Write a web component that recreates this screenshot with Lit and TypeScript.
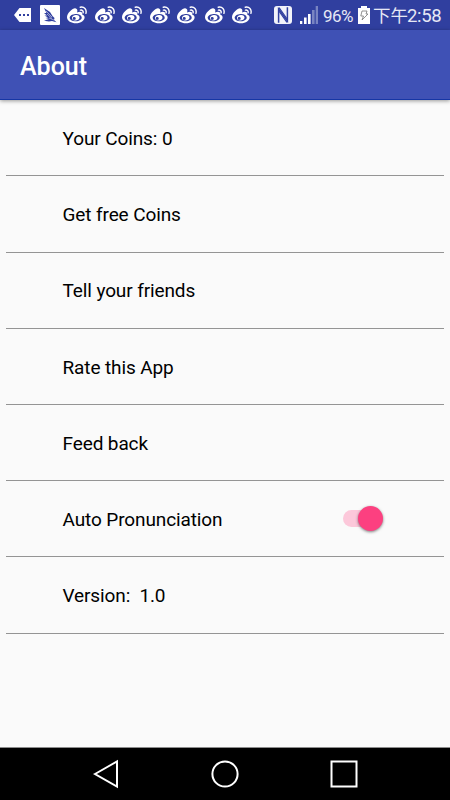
import { LitElement, html, css } from "lit";
import { customElement, property } from "lit/decorators.js";

@customElement("weibo-icon")
class WeiboIcon extends LitElement {
  static styles = css`
    :host { display: block; width: 20px; height: 18px; }
    .glyph { display: block; }
  `;
  render() {
    return html`<svg class="glyph" width="20" height="18" viewBox="0 0 20 18">
      <path fill="#fff" fill-rule="evenodd" d="M8.2 2.2C6 1.9 0 6.8 0 11.2C0 15 4.5 17.2 8.8 17.2C14 17.2 17.6 14.2 17.6 11.4C17.6 9.8 16.4 8.9 15.2 8.5C15.8 6 13.6 5.2 10.1 6.4C10.9 3.9 10 2.5 8.2 2.2ZM8.4 8.1C12 7.8 14.5 9.3 14.7 11.4C14.8 13.4 12.4 15 8.8 15.2C5.3 15.4 2.8 14.1 2.7 12.1C2.6 10 5 8.4 8.4 8.1Z"/>
      <path fill="#fff" fill-rule="evenodd" d="M8.8 8.9C11.2 8.7 12.7 9.9 12.5 11.8C12.2 13.6 10.2 14.8 8 14.6C5.7 14.4 4.6 13 5 11.5C5.4 10 7 9.1 8.8 8.9ZM7.6 11.1A1.5 1.4 0 1 0 7.7 13.8A1.5 1.4 0 0 0 7.6 11.1Z"/>
      <path fill="none" stroke="#fff" stroke-width="1.4" stroke-linecap="round" d="M13.2 1.2C17.2.3 20 3.5 18.9 7.4M13.4 4.1C15.3 3.7 16.6 5.2 16.1 6.8"/>
    </svg>`;
  }
}

@customElement("status-bar")
class StatusBar extends LitElement {
  static styles = css`
    :host { display: flex; align-items: center; height: 30px; background: #303f9f; color: #e6e8f5; white-space: nowrap; }
    .icon { display: block; flex: none; }
    .more { margin-left: 14px; }
    .bird { margin-left: 8px; }
    .alerts { display: flex; gap: 7.5px; margin-left: 7px; }
    .nfc { margin-left: 22px; }
    .signal { margin-left: 8px; }
    .percent { margin-left: 5px; width: 32px; font-size: 17px; line-height: 30px; letter-spacing: -0.5px; padding-top: 1px; }
    .battery { margin-left: 3px; }
    .clock { display: flex; align-items: center; margin-left: 3px; line-height: 30px; padding-top: 1px; }
    .period { width: 34px; margin-top: -2px; font: 17.5px/30px "Noto Sans CJK TC", sans-serif; }
    .time { font-size: 18.5px; letter-spacing: -0.35px; }
  `;
  render() {
    return html`
      <svg class="icon more" width="18" height="16" viewBox="0 0 18 16">
        <path fill="#fff" d="M5.5 1H17V15H5.5L0 8Z"/>
        <path fill="#303f9f" d="M5 7h2v2H5zM9 7h2v2H9zM13 7h2v2h-2z"/>
      </svg>
      <svg class="icon bird" width="20" height="20" viewBox="0 0 20 20">
        <rect width="20" height="20" rx="1" fill="#fff"/>
        <path fill="#303f9f" d="M4 3L10 7L12.5 11L14.5 13L14 15L16.5 17.2L12 16L9 16.5L4 15.8L9 14L5.5 13L8 12.4L4.5 10.5L7 10.4L4 8L6.5 8Z"/>
        <path fill="none" stroke="#fff" stroke-width=".5" d="M6 6L12 12M7 9L12 13.5M9 13L14 15"/>
      </svg>
      <div class="alerts">${Array.from({ length: 7 }, () => html`<weibo-icon></weibo-icon>`)}</div>
      <svg class="icon nfc" width="18" height="18" viewBox="0 0 18 18">
        <rect width="18" height="18" rx="3" fill="#f2f3fa"/>
        <path fill="none" stroke="#303f9f" stroke-width="1.5" d="M4.6 16.8V3L13.4 15V1.2"/>
        <path fill="none" stroke="#303f9f" stroke-width="1.2" d="M5 1.6L12.8 12.5M5.2 5.5L13 16.4"/>
      </svg>
      <svg class="icon signal" width="18" height="18" viewBox="0 0 18 18">
        <path fill="#fff" d="M0 15h2.3v3H0zM4 11.5h2.6v6.5H4zM8 8h2.6v10H8z"/>
        <path fill="#7984c2" d="M12 4h2.6v14H12zM15.7 0H18v18h-2.3z"/>
      </svg>
      <span class="percent">96%</span>
      <svg class="icon battery" width="12" height="18" viewBox="0 0 12 18">
        <path fill="#fff" d="M3 0h6v2h3v16H0V2h3z"/>
        <path fill="none" stroke="#777" stroke-width=".8" d="M4 5H9L8 8H10L4 14L5.5 10H2.8Z"/>
      </svg>
      <div class="clock"><span class="period">下午</span><span class="time">2:58</span></div>
    `;
  }
}

@customElement("setting-row")
class SettingRow extends LitElement {
  @property() label = "";
  static styles = css`
    :host { display: flex; align-items: center; box-sizing: border-box; height: 76.2px; margin: 0 6px; padding: 1px 61px 0 56.5px; border-bottom: 1px solid #949494; }
    .label { flex: 1; padding-top: 1.3px; font-size: 19px; line-height: 24px; letter-spacing: -0.11px; color: #000; white-space: pre; }
  `;
  render() {
    return html`<span class="label">${this.label}</span><slot></slot>`;
  }
}

@customElement("toggle-switch")
class ToggleSwitch extends LitElement {
  static styles = css`
    :host { display: flex; align-items: center; justify-content: flex-end; width: 41px; height: 26px; margin-bottom: 1px; }
    .track { width: 28px; height: 17px; margin-right: -13px; border-radius: 9px; background: #fcc8da; }
    .thumb { width: 25px; height: 25px; border-radius: 50%; background: #fc4080; box-shadow: 0 1px 3px rgba(0, 0, 0, 0.5); }
  `;
  render() {
    return html`<div class="track"></div><div class="thumb"></div>`;
  }
}

@customElement("app-root")
class AppRoot extends LitElement {
  static styles = css`
    :host { display: flex; flex-direction: column; width: 450px; height: 800px; background: #fafafa; font-family: Roboto, "Noto Sans CJK TC", sans-serif; overflow: hidden; }
    .toolbar { display: flex; align-items: center; box-sizing: border-box; height: 70px; padding: 5px 20px 0; background: #3f51b5; border-bottom: 1px solid #1636a5; box-shadow: 0 1px 4px rgba(0, 0, 0, 0.4); }
    .title { margin: 0; font-size: 25px; line-height: 32px; font-weight: 500; color: #fff; }
    .list { flex: 1; padding-top: 0.3px; }
    .nav { display: block; height: 53px; background: #000; border-top: 1px solid #8c8c8c; box-sizing: border-box; }
  `;
  render() {
    return html`
      <status-bar></status-bar>
      <header class="toolbar"><h1 class="title">About</h1></header>
      <main class="list">
        <setting-row label="Your Coins: 0"></setting-row>
        <setting-row label="Get free Coins"></setting-row>
        <setting-row label="Tell your friends"></setting-row>
        <setting-row label="Rate this App"></setting-row>
        <setting-row label="Feed back"></setting-row>
        <setting-row label="Auto Pronunciation"><toggle-switch></toggle-switch></setting-row>
        <setting-row label="Version:  1.0"></setting-row>
      </main>
      <svg class="nav" width="450" height="53" viewBox="0 0 450 52">
        <g fill="none" stroke="#fff" stroke-width="2">
          <path d="M95 26L117 13.5V38.5Z"/>
          <circle cx="225" cy="26" r="12.6"/>
          <rect x="331.5" y="13.5" width="25" height="25"/>
        </g>
      </svg>
    `;
  }
}
